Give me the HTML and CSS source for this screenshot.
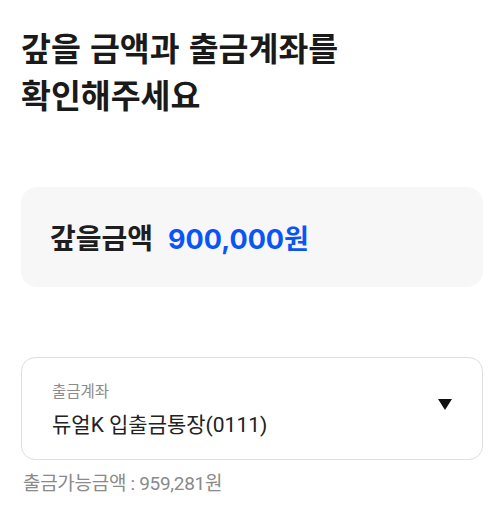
FILE: index.html
```html
<!DOCTYPE html>
<html lang="ko">
<head>
  <meta charset="UTF-8">
  <title>갚을 금액 확인</title>
  <meta name="viewport" content="width=device-width, initial-scale=1" />
  <link rel="stylesheet" href="styles.css">
</head>
<body>

  <h1 class="title">갚을 금액과 출금계좌를<br>확인해주세요</h1>

  <div class="amount-card">
    <span class="amount-label">갚을금액</span>
    <span class="amount-value">900,000원</span>
  </div>

  <div class="account-select">
    <div class="account-text">
      <span class="account-label">출금계좌</span>
      <span class="account-name">듀얼K 입출금통장(0111)</span>
    </div>
    <span class="caret"></span>
  </div>

  <p class="available">출금가능금액 : 959,281원</p>

</body>
</html>
```

FILE: styles.css
```css
body {
  margin: 0;
  padding: 0 12px 0 21px;
  background-color: #fff;
  color: #1b1b1b;
  font-family: Roboto, "Noto Sans CJK KR", sans-serif;
}
*, *:before, *:after {
  box-sizing: border-box;
}

.title {
  margin: 23px 0 0;
  font-family: "Noto Sans CJK KR", sans-serif;
  font-size: 32.5px;
  font-weight: 700;
  line-height: 47px;
  color: #1a1a1a;
}

.amount-card {
  margin-top: 70px;
  height: 100px;
  padding-left: 29px;
  border-radius: 16px;
  background-color: #f7f7f8;
  display: flex;
  align-items: center;
  gap: 15px;
  font-weight: 700;
  font-size: 28px;
}
.amount-label {
  font-family: "Noto Sans CJK KR", sans-serif;
  color: #1e1e1e;
}
.amount-value {
  font-family: Inter, "Noto Sans CJK KR", sans-serif;
  font-size: 27px;
  color: #0a55f5;
}

.account-select {
  margin-top: 70px;
  height: 103px;
  padding: 0 30px 0 30px;
  border: 1px solid #dedede;
  border-radius: 14px;
  display: flex;
  align-items: center;
  justify-content: space-between;
}
.account-text {
  display: flex;
  flex-direction: column;
  gap: 7px;
}
.account-label {
  font-size: 15.5px;
  color: #8c8c8c;
}
.account-name {
  font-size: 21px;
  color: #222;
}
.caret {
  width: 0;
  height: 0;
  margin-bottom: 8px;
  border-left: 7.5px solid transparent;
  border-right: 7.5px solid transparent;
  border-top: 11px solid #111;
}

.available {
  margin: 8px 0 0 2px;
  font-size: 19px;
  letter-spacing: -0.3px;
  color: #8a8a8a;
}
```
